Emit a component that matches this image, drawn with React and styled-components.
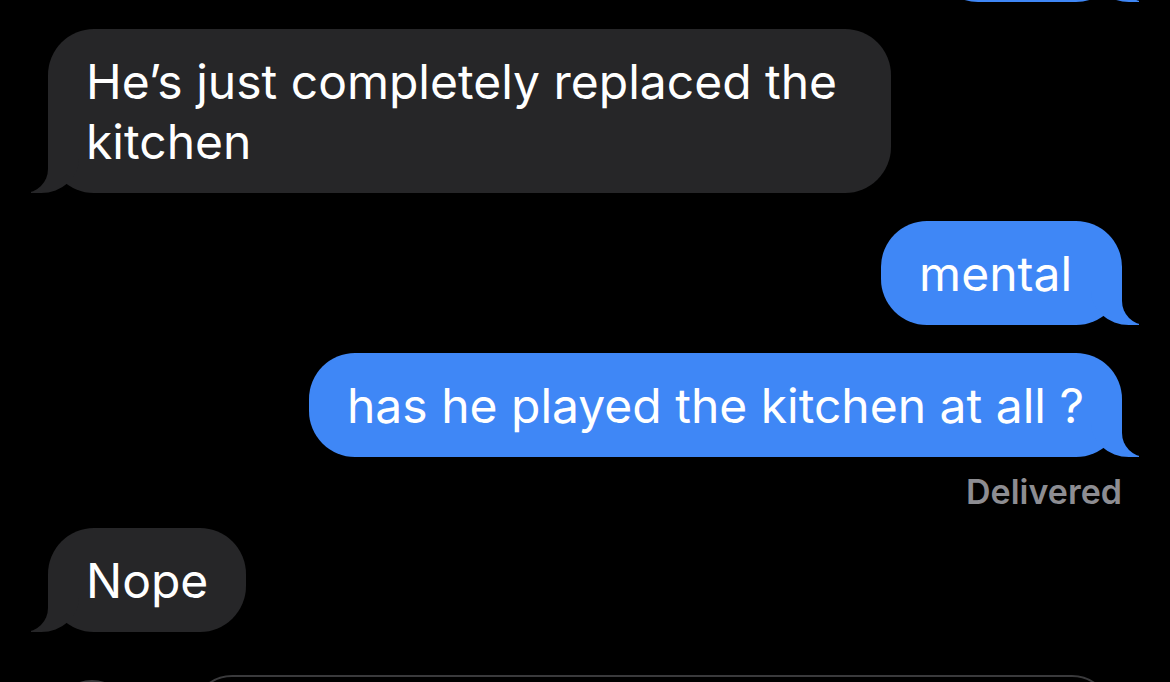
import React from "react";
import styled, { createGlobalStyle } from "styled-components";

const BLUE = "#3f87f6";
const GRAY = "#262628";

const GlobalStyle = createGlobalStyle`
  html, body {
    margin: 0;
    padding: 0;
    background: #000;
    height: 682px;
    overflow: hidden;
  }
  body {
    font-family: Inter, "Noto Sans", sans-serif;
  }
`;

const Thread = styled.div`
  display: flex;
  flex-direction: column;
  box-sizing: border-box;
  height: 682px;
  padding: 0 48px;
  overflow: hidden;
`;

const Bubble = styled.div`
  position: relative;
  box-sizing: border-box;
  max-width: 843px;
  margin-top: ${(p) => p.$mt}px;
  padding: 23px ${(p) => p.$padRight || 38}px 21px 38px;
  border-radius: 46px;
  align-self: ${(p) => (p.$sent ? "flex-end" : "flex-start")};
  background: ${(p) => (p.$sent ? BLUE : GRAY)};
  color: #fff;
  font-size: 48px;
  line-height: 60px;
  font-weight: 400;
  white-space: pre-wrap;

  /* tail */
  &::before {
    content: "";
    position: absolute;
    bottom: 0;
    width: 48px;
    height: 48px;
    background: ${(p) => (p.$sent ? BLUE : GRAY)};
    ${(p) =>
      p.$sent
        ? "right: -17px; border-bottom-left-radius: 38px 34px;"
        : "left: -17px; border-bottom-right-radius: 38px 34px;"}
  }
  &::after {
    content: "";
    position: absolute;
    bottom: 0;
    width: 62px;
    height: 48px;
    background: #000;
    ${(p) =>
      p.$sent
        ? "right: -62px; border-bottom-left-radius: 24px;"
        : "left: -62px; border-bottom-right-radius: 24px;"}
  }
`;

const Status = styled.div`
  align-self: flex-end;
  margin-top: 20px;
  margin-bottom: -7px;
  font-size: 34px;
  line-height: 30px;
  font-weight: 600;
  color: #8d8d92;
`;

const Composer = styled.div`
  display: flex;
  align-items: flex-start;
  margin-top: 43px;
`;

const AppsButton = styled.div`
  flex: none;
  width: 72px;
  height: 72px;
  margin: 5px 0 0 6px;
  border-radius: 50%;
  border: 2px solid #3a3a3c;
  background: #111;
`;

const Field = styled.div`
  flex: none;
  width: 920px;
  height: 80px;
  margin-left: 62px;
  box-sizing: border-box;
  border-radius: 40px;
  border: 2px solid #3a3a3c;
`;

const messages = [
  { id: 0, sent: true, text: "\u00a0", mt: -102, width: 190 },
  { id: 1, sent: false, text: "He’s just completely replaced the kitchen", mt: 27 },
  { id: 2, sent: true, text: "mental", mt: 28, padRight: 50 },
  { id: 3, sent: true, text: "has he played the kitchen at all ?", mt: 28, status: "Delivered" },
  { id: 4, sent: false, text: "Nope", mt: 28 },
];

export default function App() {
  return (
    <>
      <GlobalStyle />
      <Thread>
        {messages.map((m) => (
          <React.Fragment key={m.id}>
            <Bubble
              $sent={m.sent}
              $mt={m.mt}
              $padRight={m.padRight}
              style={m.width ? { width: m.width } : undefined}
            >
              {m.text}
            </Bubble>
            {m.status && <Status>{m.status}</Status>}
          </React.Fragment>
        ))}
        <Composer>
          <AppsButton />
          <Field />
        </Composer>
      </Thread>
    </>
  );
}
